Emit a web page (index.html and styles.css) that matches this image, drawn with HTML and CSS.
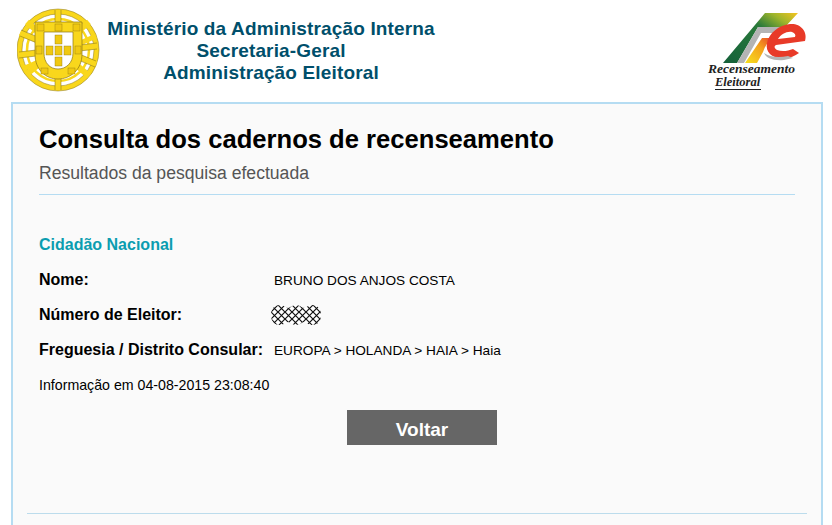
FILE: index.html
```html
<!DOCTYPE html>
<html lang="pt">
<head>
    <meta charset="UTF-8">
    <meta name="viewport" content="width=device-width, initial-scale=1.0">
    <title>Consulta dos cadernos de recenseamento</title>
    <link rel="stylesheet" href="styles.css">
</head>
<body>
    <div class="header">
        <svg class="logo-left" width="84" height="86" viewBox="0 0 84 86">
            <circle cx="41" cy="42" r="38.5" fill="none" stroke="#f9d71c" stroke-width="5"/>
            <circle cx="41" cy="42" r="41" fill="none" stroke="#8a7414" stroke-width="0.5"/>
            <circle cx="41" cy="42" r="36" fill="none" stroke="#8a7414" stroke-width="0.5"/>
            <circle cx="41" cy="42" r="31" fill="none" stroke="#f9d71c" stroke-width="2.5"/>
            <g stroke="#f9d71c" stroke-width="6" fill="none">
                <path d="M41 2V82"/>
                <path d="M3 25L79 56"/>
                <path d="M2 47L80 38"/>
                <path d="M10 66L72 14"/>
                <path d="M79 28L8 60" stroke-width="5"/>
                <path d="M10 14L72 68"/>
            </g>
            <g stroke="#7d6a12" stroke-width="0.5" fill="none">
                <path d="M38 2V82M44 2V82"/>
                <path d="M4 22L79 53M3 28L78 59"/>
                <path d="M2 44L80 35M2 50L80 41"/>
            </g>
            <path d="M18 14H65V46C65 62 53 71 41 71C29 71 18 62 18 46Z" fill="#f9d71c" stroke="#8a7414" stroke-width="0.7"/>
            <path d="M27 24H56V45C56 55 49 61 41 61C33 61 27 55 27 45Z" fill="#fff" stroke="#8a7414" stroke-width="0.7"/>
            <g fill="#f0c911" stroke="#8a7414" stroke-width="0.4">
                <rect x="20" y="16" width="7" height="7"/>
                <rect x="38" y="16" width="7" height="7"/>
                <rect x="56" y="16" width="7" height="7"/>
                <rect x="19" y="38" width="6" height="8"/>
                <rect x="58" y="38" width="6" height="8"/>
                <rect x="24" y="60" width="7" height="6"/>
                <rect x="51" y="60" width="7" height="6"/>
                <rect x="38" y="27" width="7" height="9"/>
                <rect x="29" y="38" width="7" height="9"/>
                <rect x="38" y="38" width="7" height="9"/>
                <rect x="47" y="38" width="7" height="9"/>
                <rect x="38" y="49" width="7" height="9"/>
            </g>
        </svg>
        <div class="header-title">
            <div>Ministério da Administração Interna</div>
            <div>Secretaria-Geral</div>
            <div>Administração Eleitoral</div>
        </div>
        <div class="logo-right">
            <svg width="110" height="60" viewBox="0 0 110 60">
                <defs>
                    <linearGradient id="stripe" x1="0" y1="1" x2="1" y2="0">
                        <stop offset="0" stop-color="#14603a"/>
                        <stop offset="0.62" stop-color="#2a7a3a"/>
                        <stop offset="0.82" stop-color="#9db52c"/>
                        <stop offset="1" stop-color="#f6c420"/>
                    </linearGradient>
                    <linearGradient id="flame" x1="0" y1="1" x2="1" y2="0">
                        <stop offset="0" stop-color="#f6e020"/>
                        <stop offset="0.6" stop-color="#f4a11c"/>
                        <stop offset="1" stop-color="#e8482a"/>
                    </linearGradient>
                </defs>
                <path d="M65 3H98L85 17H58L37 53H23Z" fill="url(#stripe)"/>
                <path d="M58 17H84L78 23H61L44 53H37Z" fill="#b4b4b4"/>
                <path d="M45 53L62 28H72C68 32 65 36 63 42L57 53Z" fill="url(#flame)"/>
                <path d="M105 31C108 21 100 13 90 14C79 15 69 23 67 33C65 43 73 49 84 48C90 48 95 46 99 43L93 39C88 41 82 42 77 40C74 38 74 36 76 35ZM78 29C81 24 87 21 92 22C95 23 96 25 95 27Z" fill="#e83a28"/>
                <path d="M64 43C66 48 73 51 84 50L93 48L88 46C78 48 70 47 64 43Z" fill="#b4b4b4"/>
            </svg>
            <div class="logo-word">Recenseamento</div>
            <div class="logo-word logo-word-under">Eleitoral</div>
        </div>
    </div>

    <div class="panel">
        <h1>Consulta dos cadernos de recenseamento</h1>
        <h2>Resultados da pesquisa efectuada</h2>
        <hr class="rule">

        <h3>Cidadão Nacional</h3>
        <div class="rows">
            <div class="row">
                <span class="label">Nome:</span>
                <span class="value">BRUNO DOS ANJOS COSTA</span>
            </div>
            <div class="row">
                <span class="label">Número de Eleitor:</span>
                <svg class="censored" width="50" height="20" viewBox="0 0 50 20">
                    <defs>
                        <pattern id="lattice" width="7" height="7" patternUnits="userSpaceOnUse">
                            <rect width="7" height="7" fill="#fff"/>
                            <path d="M-1 -1L8 8M-1 8L8 -1" stroke="#111" stroke-width="1.2"/>
                        </pattern>
                    </defs>
                    <path d="M0 10C0 3 4 0 9 0C13 0 15 3 17 3C19 3 21 0 25 0C29 0 31 3 33 3C35 3 37 0 41 0C46 0 50 3 50 10C50 17 46 20 41 20C37 20 35 17 33 17C31 17 29 20 25 20C21 20 19 17 17 17C15 17 13 20 9 20C4 20 0 17 0 10Z" fill="url(#lattice)"/>
                </svg>
            </div>
            <div class="row">
                <span class="label">Freguesia / Distrito Consular:</span>
                <span class="value">EUROPA &gt; HOLANDA &gt; HAIA &gt; Haia</span>
            </div>
        </div>
        <p class="info">Informação em 04-08-2015 23:08:40</p>
        <div class="actions">
            <button class="btn-back">Voltar</button>
        </div>
        <hr class="rule-bottom">
    </div>
</body>
</html>
```

FILE: styles.css
```css
html, body {
    height: 525px;
    overflow: hidden;
}
body {
    margin: 0;
    background: #fff;
    font-family: 'Liberation Sans', Arial, sans-serif;
    color: #000;
}
.header {
    display: flex;
    height: 102px;
    padding-left: 17px;
}
.logo-left {
    margin-top: 8px;
}
.header-title {
    width: 340px;
    padding-top: 18px;
    text-align: center;
    font-size: 19px;
    letter-spacing: 0.15px;
    font-weight: bold;
    line-height: 22px;
    color: #004f6b;
}
.logo-right {
    margin-left: 259px;
    padding-top: 10px;
    width: 110px;
}
.logo-right svg {
    display: block;
    margin-bottom: -8px;
}
.logo-word {
    margin-left: 8px;
    font-family: 'Liberation Serif', serif;
    font-style: italic;
    font-weight: bold;
    font-size: 13.5px;
    line-height: 14px;
    color: #222;
}
.logo-word-under {
    width: 46px;
    margin-left: 15px;
    border-bottom: 1px solid #222;
    line-height: 13px;
    font-size: 12.5px;
}
.panel {
    margin: 0 9px 0 11px;
    height: 423px;
    box-sizing: border-box;
    border: 2px solid #b5dcf2;
    border-bottom: none;
    background: #fafafa;
    padding: 20px 26px 0 26px;
}
h1 {
    margin: 0;
    font-size: 25.6px;
    line-height: 30px;
    font-weight: bold;
}
h2 {
    margin: 9px 0 0;
    font-size: 17.6px;
    line-height: 20px;
    font-weight: normal;
    color: #555;
}
.rule {
    margin: 11px 0 0;
    border: none;
    border-top: 1px solid #b5dcf2;
}
h3 {
    margin: 41px 0 0;
    font-size: 16px;
    line-height: 18px;
    font-weight: bold;
    color: #0b9db0;
}
.rows {
    margin-top: 8px;
}
.row {
    display: flex;
    align-items: center;
    height: 35px;
}
.label {
    width: 235px;
    font-size: 16px;
    font-weight: bold;
}
.value {
    padding-top: 1px;
    font-size: 13.65px;
}
.censored {
    margin-left: -3px;
}
.info {
    margin: 10px 0 0;
    font-size: 14.2px;
    line-height: 16px;
}
.actions {
    display: flex;
    justify-content: center;
    margin-top: 17px;
    padding-left: 10px;
}
.btn-back {
    width: 150px;
    height: 35px;
    padding: 5px 0 0;
    border: none;
    background: #666;
    color: #fff;
    font-family: inherit;
    font-size: 19px;
    font-weight: bold;
}
.rule-bottom {
    margin: 68px -12px 0;
    border: none;
    border-top: 1px solid #bcdcec;
}
```
